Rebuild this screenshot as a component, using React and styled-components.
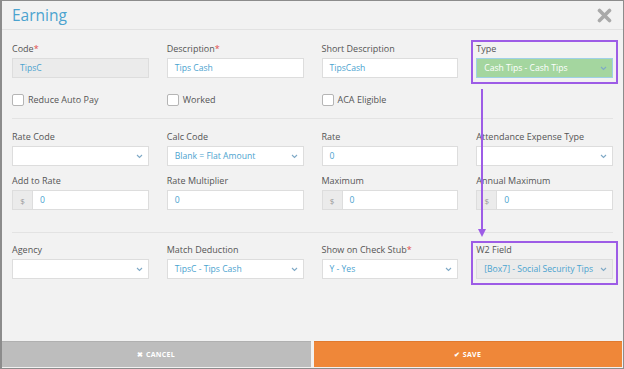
import React from "react";
import styled, { createGlobalStyle } from "styled-components";

const Global = createGlobalStyle`
	html, body {
		margin: 0;
		padding: 0;
		background: #ffffff;
	}
	body {
		font-family: "Open Sans", "Liberation Sans", sans-serif;
	}
`;

const BLUE = "#4ba3cf";
const PURPLE = "#9d5ce6";

function Chevron() {
	return (
		<svg width="7" height="5" viewBox="0 0 7 5">
			<path d="M1 1 L3.5 3.5 L6 1" fill="none" stroke="#7fa9c6" strokeWidth="1.1" />
		</svg>
	);
}

function CloseIcon() {
	return (
		<svg width="15" height="15" viewBox="0 0 15 15">
			<path d="M2.5 2.5 L12.5 12.5 M12.5 2.5 L2.5 12.5" stroke="#a9a9a9" strokeWidth="3.6" strokeLinecap="round" />
		</svg>
	);
}

function TextInput({ value, disabled, prefix }) {
	return (
		<InputGroup>
			{prefix && <Addon>{prefix}</Addon>}
			<Input disabled={disabled}>{value}</Input>
		</InputGroup>
	);
}

function Select({ value, variant }) {
	return (
		<SelectBox variant={variant}>
			<span>{value}</span>
			<Chevron />
		</SelectBox>
	);
}

function Field({ label, required, highlight, children }) {
	return (
		<FieldWrap highlight={highlight}>
			<Label>
				{label}
				{required && <Star>*</Star>}
			</Label>
			{children}
		</FieldWrap>
	);
}

function Check({ label }) {
	return (
		<CheckRow>
			<Box />
			<span>{label}</span>
		</CheckRow>
	);
}

export default function App() {
	return (
		<>
			<Global />
			<Frame>
				<Header>
					<Title>Earning</Title>
					<CloseIcon />
				</Header>
				<Body>
					<Grid>
						<Field label="Code" required>
							<TextInput value="TipsC" disabled />
						</Field>
						<Field label="Description" required>
							<TextInput value="Tips Cash" />
						</Field>
						<Field label="Short Description">
							<TextInput value="TipsCash" />
						</Field>
						<Field label="Type" highlight>
							<Select value="Cash Tips - Cash Tips" variant="green" />
						</Field>
					</Grid>
					<CheckGrid>
						<Check label="Reduce Auto Pay" />
						<Check label="Worked" />
						<Check label="ACA Eligible" />
					</CheckGrid>
					<Divider />
					<Grid>
						<Field label="Rate Code">
							<Select value="" />
						</Field>
						<Field label="Calc Code">
							<Select value="Blank = Flat Amount" />
						</Field>
						<Field label="Rate">
							<TextInput value="0" />
						</Field>
						<Field label="Attendance Expense Type">
							<Select value="" />
						</Field>
						<Field label="Add to Rate">
							<TextInput value="0" prefix="$" />
						</Field>
						<Field label="Rate Multiplier">
							<TextInput value="0" />
						</Field>
						<Field label="Maximum">
							<TextInput value="0" prefix="$" />
						</Field>
						<Field label="Annual Maximum">
							<TextInput value="0" prefix="$" />
						</Field>
					</Grid>
					<Divider wide />
					<Grid>
						<Field label="Agency">
							<Select value="" />
						</Field>
						<Field label="Match Deduction">
							<Select value="TipsC - Tips Cash" />
						</Field>
						<Field label="Show on Check Stub" required>
							<Select value="Y - Yes" />
						</Field>
						<Field label="W2 Field" highlight>
							<Select value="[Box7] - Social Security Tips" variant="muted" />
						</Field>
					</Grid>
					<Arrow width="10" height="150" viewBox="0 0 10 150">
						<line x1="5" y1="0" x2="5" y2="142" stroke={PURPLE} strokeWidth="2" />
						<path d="M1 140 L9 140 L5 148 Z" fill={PURPLE} />
					</Arrow>
				</Body>
				<Footer>
					<Button kind="cancel">✖ CANCEL</Button>
					<Button kind="save">✔ SAVE</Button>
				</Footer>
			</Frame>
		</>
	);
}

const Frame = styled.div`
	width: 624px;
	height: 369px;
	box-sizing: border-box;
	border: 1px solid #8c8c8c;
	border-left-width: 2px;
	background: #f2f2f2;
	display: flex;
	flex-direction: column;
`;

const Header = styled.div`
	height: 28px;
	border-bottom: 1px solid #e2e2e2;
	display: flex;
	align-items: center;
	justify-content: space-between;
	padding: 0 11px 0 10px;
`;

const Title = styled.div`
	font-size: 15.5px;
	color: ${BLUE};
	line-height: 1;
	margin-top: 1px;
`;

const Body = styled.div`
	flex: 1;
	position: relative;
	padding: 13px 10px 0 10px;
`;

const Grid = styled.div`
	display: grid;
	grid-template-columns: repeat(4, 1fr);
	column-gap: 18px;
	row-gap: 9px;
`;

const CheckGrid = styled(Grid)`
	margin-top: 15px;
`;

const FieldWrap = styled.div`
	position: relative;
	${(p) =>
		p.highlight &&
		`
		&::after {
			content: "";
			position: absolute;
			top: -3px;
			left: -5px;
			right: -5px;
			bottom: -6px;
			border: 2px solid ${PURPLE};
			pointer-events: none;
		}
	`}
`;

const Label = styled.div`
	font-size: 9px;
	line-height: 12px;
	color: #555555;
	margin-bottom: 3px;
`;

const Star = styled.span`
	color: #e04b4b;
`;

const InputGroup = styled.div`
	display: flex;
	height: 20px;
`;

const Addon = styled.div`
	width: 20px;
	box-sizing: border-box;
	background: #ebebeb;
	border: 1px solid #dddddd;
	border-right: none;
	color: #999999;
	font-size: 8px;
	display: flex;
	align-items: center;
	justify-content: center;
`;

const Input = styled.div`
	flex: 1;
	box-sizing: border-box;
	border: 1px solid #dddddd;
	background: ${(p) => (p.disabled ? "#ebebeb" : "#ffffff")};
	color: ${BLUE};
	font-size: 8.6px;
	display: flex;
	align-items: center;
	padding: 0 7px;
`;

const SelectBox = styled.div`
	height: 20px;
	box-sizing: border-box;
	border: 1px solid ${(p) => (p.variant === "green" ? "#9fd0e6" : "#dddddd")};
	background: ${(p) =>
		p.variant === "green" ? "#a4d69f" : p.variant === "muted" ? "#ebebeb" : "#ffffff"};
	color: ${(p) => (p.variant === "green" ? "#ffffff" : BLUE)};
	font-size: 8.6px;
	display: flex;
	align-items: center;
	justify-content: space-between;
	padding: 0 5px 0 7px;
`;

const CheckRow = styled.div`
	display: flex;
	align-items: center;
	gap: 4px;
	font-size: 9px;
	color: #555555;
	height: 13px;
`;

const Box = styled.div`
	width: 12px;
	height: 12px;
	box-sizing: border-box;
	border: 1px solid #b5b5b5;
	border-radius: 2px;
	background: #ffffff;
`;

const Divider = styled.div`
	height: 1px;
	background: #e3e3e3;
	margin: 12px 0 12px 0;
	${(p) => p.wide && `margin-top: 22px; margin-bottom: 11px;`}
`;

const Arrow = styled.svg`
	position: absolute;
	left: 475px;
	top: 59px;
`;

const Footer = styled.div`
	display: flex;
	gap: 3px;
	padding: 0 1px 1px 0;
	height: 26px;
`;

const Button = styled.div`
	flex: 1;
	display: flex;
	align-items: center;
	justify-content: center;
	color: #ffffff;
	font-size: 7px;
	font-weight: 700;
	letter-spacing: 0.3px;
	background: ${(p) => (p.kind === "save" ? "#ef8739" : "#bdbdbd")};
	border-top: 1px solid ${(p) => (p.kind === "save" ? "#e07a30" : "#b0b0b0")};
`;
